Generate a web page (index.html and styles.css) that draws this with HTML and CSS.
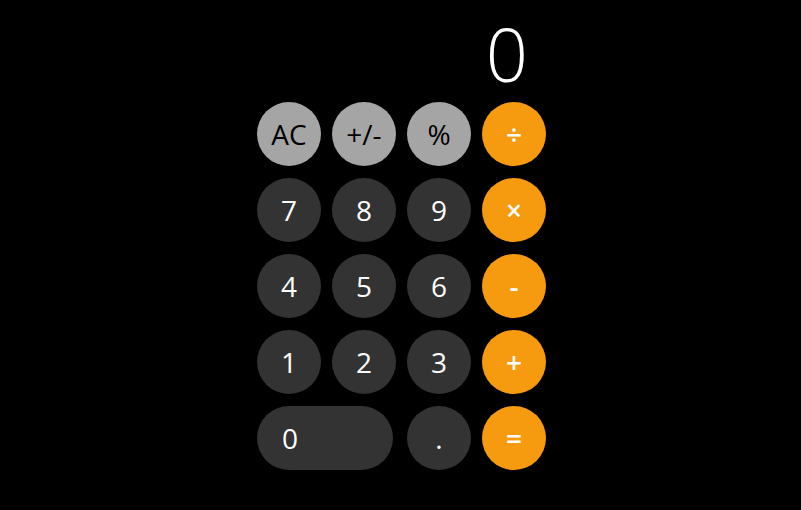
FILE: index.html
```html
<!DOCTYPE html>
<html>
<head>
<meta charset="utf-8">
<link rel="stylesheet" href="styles.css">
</head>
<body>
<div class="calc">
  <div class="display">0</div>
  <div class="keys">
    <button class="key light">AC</button>
    <button class="key light">+/-</button>
    <button class="key light">%</button>
    <button class="key op">÷</button>
    <button class="key">7</button>
    <button class="key">8</button>
    <button class="key">9</button>
    <button class="key op">×</button>
    <button class="key">4</button>
    <button class="key">5</button>
    <button class="key">6</button>
    <button class="key op">-</button>
    <button class="key">1</button>
    <button class="key">2</button>
    <button class="key">3</button>
    <button class="key op">+</button>
    <button class="key zero">0</button>
    <button class="key">.</button>
    <button class="key op">=</button>
  </div>
</div>
</body>
</html>
```
FILE: styles.css
```css
html, body {
  margin: 0;
  padding: 0;
  background: #000;
  height: 100%;
}
body {
  font-family: "Open Sans", "Noto Sans", sans-serif;
}
.calc {
  width: 289px;
  margin-left: calc(50% - 143.5px);
  padding-top: 16px;
}
.display {
  color: #fff;
  font-size: 74px;
  font-weight: 300;
  line-height: 76px;
  text-align: right;
  padding-right: 18px;
  height: 86px;
}
.keys {
  display: grid;
  grid-template-columns: repeat(4, 64px);
  grid-auto-rows: 64px;
  column-gap: 11px;
  row-gap: 12px;
}
.key {
  border: none;
  border-radius: 32px;
  background: #333333;
  color: #fff;
  font-family: inherit;
  font-size: 28px;
  padding: 0;
  width: 64px;
  height: 64px;
}
.key.light {
  background: #a5a5a5;
  color: #000;
}
.key.op {
  background: #f69a0f;
  color: #fff;
  font-weight: 600;
}
.key.zero {
  grid-column: span 2;
  width: 136px;
  text-align: left;
  padding-left: 25px;
}
```
